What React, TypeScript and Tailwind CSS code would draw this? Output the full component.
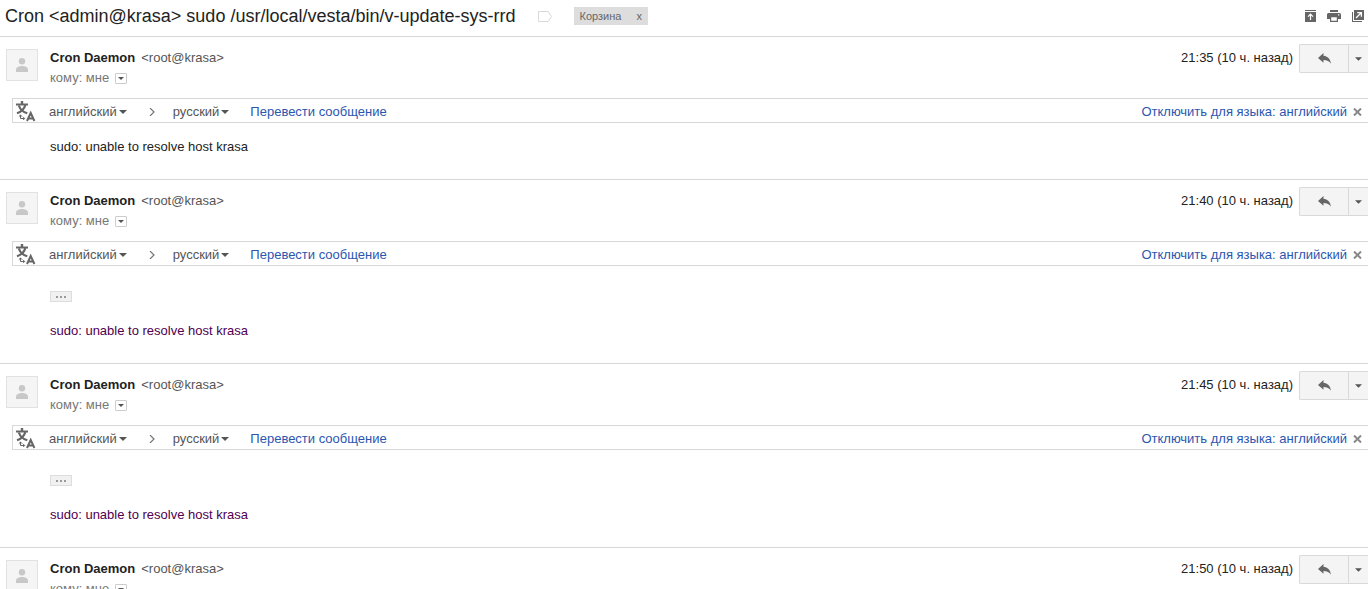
import React from "react";

type Message = { id: string; time: string; quoted: boolean };

const messages: Message[] = [
  { id: "m1", time: "21:35", quoted: false },
  { id: "m2", time: "21:40", quoted: true },
  { id: "m3", time: "21:45", quoted: true },
  { id: "m4", time: "21:50", quoted: true },
];

function Caret({ className }: { className: string }) {
  return (
    <svg className={className} viewBox="0 0 8 4" fill="currentColor" aria-hidden="true">
      <path d="M0 0h8L4 4z" />
    </svg>
  );
}

function LabelIcon() {
  return (
    <svg width="14" height="11" viewBox="0 0 14 11" fill="none" stroke="#d8d8d8" aria-hidden="true">
      <path d="M.5.5h9.700L13.500 5.500 10.200 10.500H.5z" />
    </svg>
  );
}

function CollapseIcon() {
  return (
    <svg width="11" height="12" viewBox="0 0 11 12" aria-hidden="true">
      <path d="M0 0h11v1H0zM0 2h11v10H0z" fill="#666" />
      <path d="M5.500 10V4.500M3 6.700 5.500 4.200l2.500 2.500" fill="none" stroke="#fff" strokeWidth="1.200" />
    </svg>
  );
}

function PrintIcon() {
  return (
    <svg width="14" height="12" viewBox="0 0 14 12" aria-hidden="true">
      <path d="M3 0h8v2H3z" fill="#666" />
      <path d="M1.500 3h11A1.500 1.500 0 0 1 14 4.500V9h-3V7H3v2H0V4.500A1.500 1.500 0 0 1 1.500 3z" fill="#666" />
      <path d="M3.600 6.600h6.800v4.800H3.600z" fill="#fff" stroke="#666" strokeWidth="1.200" />
      <path d="M11 4.300h1.300v1.200H11z" fill="#fff" />
    </svg>
  );
}

function PopOutIcon() {
  return (
    <svg width="12" height="12" viewBox="0 0 12 12" aria-hidden="true">
      <path d="M0 2h1v9h9v1H0zM2 0h10v10H2z" fill="#666" />
      <path d="M4 8l5.200-5.200M5.200 2.600h4.200v4.200" fill="none" stroke="#fff" strokeWidth="1.300" />
    </svg>
  );
}

function TranslateIcon() {
  return (
    <svg className="shrink-0" width="20" height="22" viewBox="0 0 20 22" fill="none" stroke="#666" aria-hidden="true">
      <path d="M0 4.500h12" strokeWidth="2" />
      <path d="M6 1v3.500" strokeWidth="2.400" />
      <path d="M9.300 5C8.300 9 6 11.500 1 13.300M2.800 5.500C4 9 7 12 11.300 13.300" strokeWidth="2.200" />
      <path d="M4.500 15v3.500h4M2.800 16.700 4.500 15l1.700 1.700M7.200 17 8.700 18.500 7.200 20" strokeWidth="1" />
      <path d="M11 21 14.700 13 18.400 21M12.300 18.500h4.800" strokeWidth="2" />
    </svg>
  );
}

function ReplyIcon() {
  return (
    <svg width="13" height="11" viewBox="0 0 13 11" fill="#666" aria-hidden="true">
      <path d="M5.500 0v2.700C9.500 3 12.500 6 13 10.800 11.300 8.200 9 7 5.500 7v2.800L0 4.900z" />
    </svg>
  );
}

function LanguageSelect({ id, label, value, options }: { id: string; label: string; value: string; options: string[] }) {
  return (
    <span className="flex items-center gap-0.5 text-[#555]">
      <select
        id={id}
        aria-label={label}
        defaultValue={value}
        className="field-sizing-content h-5 cursor-pointer appearance-none bg-transparent p-0 leading-5"
      >
        {options.map((option) => (
          <option key={option}>{option}</option>
        ))}
      </select>
      <Caret className="h-1 w-2" />
    </span>
  );
}

function TranslateBar({ id }: { id: string }) {
  return (
    <div className="ml-3 flex h-[25px] items-end border border-r-0 border-[#d8d8d8] pl-[3px] pr-1.5 leading-5">
      <TranslateIcon />
      <div className="ml-[13px] flex h-5 items-center">
        <LanguageSelect id={`${id}-from`} label="С языка" value="английский" options={["английский", "русский"]} />
        <svg className="ml-5 mr-[17px] h-2 w-[9px]" viewBox="0 0 9 8" fill="none" stroke="#777" strokeWidth="1.200" aria-hidden="true">
          <path d="M3 0l4 4-4 4" />
        </svg>
        <LanguageSelect id={`${id}-to`} label="На язык" value="русский" options={["русский", "английский"]} />
      </div>
      <div className="ml-[21px] flex h-5 grow items-center justify-between">
        <a href="#translate" className="text-[#2a56b0]">
          Перевести сообщение
        </a>
        <div className="flex items-center gap-1.5">
          <a href="#disable" className="text-[#2a56b0]">
            Отключить для языка: английский
          </a>
          <button type="button" aria-label="Закрыть">
            <svg width="9" height="8" viewBox="0 0 9 8" stroke="#888" strokeWidth="2" aria-hidden="true">
              <path d="M1 .5l7 7M8 .5l-7 7" />
            </svg>
          </button>
        </div>
      </div>
    </div>
  );
}

function MessageItem({ message }: { message: Message }) {
  return (
    <article className="border-b border-[#d8d8d8]">
      <header className="flex h-[61px] items-start pl-1.5">
        <div className="mt-3 flex h-8 w-8 shrink-0 items-center justify-center border border-[#e2e2e2] bg-[#f5f5f5]">
          <svg width="12" height="14" viewBox="0 0 12 14" fill="#c8c8c8" aria-hidden="true">
            <circle cx="6" cy="3.200" r="3.200" />
            <path d="M0 14v-2.500C0 9 3.500 8 6 8s6 1 6 3.500V14z" />
          </svg>
        </div>
        <div className="ml-3 mt-[11px] leading-5">
          <div className="flex gap-1.5">
            <h2 className="font-bold text-[#222]">Cron Daemon</h2>
            <span className="text-[#555]">&lt;root@krasa&gt;</span>
          </div>
          <div className="flex items-center gap-1.5 text-[#777]">
            <span>кому: мне</span>
            <button
              type="button"
              aria-label="Показать подробности"
              className="flex h-[11px] w-3 items-center justify-center rounded-[1px] border border-[#ccc] text-[#555]"
            >
              <Caret className="h-[3px] w-1.5" />
            </button>
          </div>
        </div>
        <time className="ml-auto mt-[11px] leading-5 text-[#222]">{message.time} (10 ч. назад)</time>
        <div className="ml-1.5 mt-[7px] flex h-[29px] rounded-l-xs border border-r-0 border-[#d9d9d9] bg-[#f4f4f4] text-[#555]">
          <button type="button" aria-label="Ответить" className="flex w-12 items-center justify-center">
            <ReplyIcon />
          </button>
          <button type="button" aria-label="Ещё" className="flex w-5 items-center justify-center border-l border-[#d9d9d9]">
            <Caret className="h-1 w-[7px]" />
          </button>
        </div>
      </header>
      <TranslateBar id={message.id} />
      {message.quoted ? (
        <div className="pb-[22px] pl-[50px] pt-[25px] text-[#500050]">
          <button
            type="button"
            aria-label="Показать скрытый текст"
            className="flex h-[11px] w-[22px] items-center justify-center gap-0.5 border border-[#ddd] bg-[#f1f1f1]"
          >
            <i className="h-0.5 w-0.5 bg-[#999]" />
            <i className="h-0.5 w-0.5 bg-[#999]" />
            <i className="h-0.5 w-0.5 bg-[#999]" />
          </button>
          <p className="mt-[19px] leading-5">sudo: unable to resolve host krasa</p>
        </div>
      ) : (
        <p className="pb-[22px] pl-[50px] pt-3.5 leading-5 text-[#222]">sudo: unable to resolve host krasa</p>
      )}
    </article>
  );
}

export default function App() {
  return (
    <main className="h-screen overflow-hidden bg-white font-['Liberation_Sans',Arial,sans-serif] text-[13px]">
      <header className="flex h-[37px] items-center border-b border-[#d8d8d8] pb-1 pl-[5px] pr-1">
        <h1 className="text-lg text-[#222]">Cron &lt;admin@krasa&gt; sudo /usr/local/vesta/bin/v-update-sys-rrd</h1>
        <button type="button" aria-label="Метка" className="ml-[22px]">
          <LabelIcon />
        </button>
        <span className="ml-[22px] flex h-[18px] items-center gap-[15px] bg-[#ddd] px-1.5 text-[11px] text-[#666]">
          Корзина
          <button type="button" aria-label="Удалить ярлык">
            x
          </button>
        </span>
        <div className="ml-auto flex items-center gap-[11px]">
          <button type="button" aria-label="Свернуть все">
            <CollapseIcon />
          </button>
          <button type="button" aria-label="Печать">
            <PrintIcon />
          </button>
          <button type="button" aria-label="В новом окне">
            <PopOutIcon />
          </button>
        </div>
      </header>
      {messages.map((message) => (
        <MessageItem key={message.id} message={message} />
      ))}
    </main>
  );
}
